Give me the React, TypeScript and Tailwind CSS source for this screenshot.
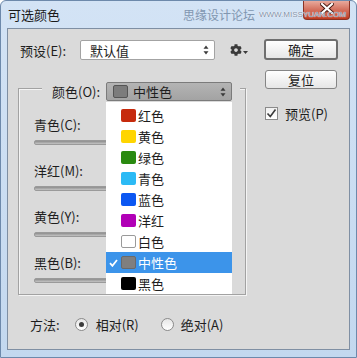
import { FaCog } from "react-icons/fa";

const items = [
	{ name: "红色", color: "bg-[#c62a0c]" },
	{ name: "黄色", color: "bg-[#ffd500]" },
	{ name: "绿色", color: "bg-[#2a8a10]" },
	{ name: "青色", color: "bg-[#2bbaf5]" },
	{ name: "蓝色", color: "bg-[#0b57f2]" },
	{ name: "洋红", color: "bg-[#b100b6]" },
	{ name: "白色", color: "bg-white border border-[#9a9a9a]" },
	{ name: "中性色", color: "bg-[#7f7f7f] border border-[#6a6a6a]", active: true },
	{ name: "黑色", color: "bg-black" },
];

const sliders = ["青色(C):", "洋红(M):", "黄色(Y):", "黑色(B):"];

function UpDown() {
	return (
		<svg width="6" height="10" viewBox="0 0 6 10" className="shrink-0">
			<path d="M3 0.5 L5.5 3.8 L0.5 3.8 Z" fill="#3a3a3a" />
			<path d="M3 9.5 L5.5 6.2 L0.5 6.2 Z" fill="#3a3a3a" />
		</svg>
	);
}

function Radio({ checked }: { checked?: boolean }) {
	return (
		<span className="w-[13px] h-[13px] rounded-full border border-[#8a8a8a] bg-gradient-to-b from-[#e6e6e6] to-white flex items-center justify-center shrink-0">
			{checked && <span className="w-[5px] h-[5px] rounded-full bg-[#3b3b3b]" />}
		</span>
	);
}

export default function App() {
	return (
		<div className="w-[357px] h-[358px] bg-gradient-to-b from-[#d3e3f5] to-[#c3d8ef] border border-[#6d89ab] rounded-t-[6px] flex flex-col px-[6px] pb-[7px] relative overflow-hidden text-[13px] text-[#1e1e1e] font-['Noto_Sans_CJK_SC',sans-serif] leading-none">
			{/* title bar */}
			<div className="h-[27px] flex items-center shrink-0">
				<span className="pl-[1px] text-[13px] text-[#1a1a1a]">可选颜色</span>
				<div className="ml-auto pr-[4px] flex items-center gap-[4px] relative z-10">
					<span className="text-[12px] text-[#8196b0]">思缘设计论坛</span>
					<span className="text-[8px] text-[#7d8ea6] font-['Liberation_Sans',sans-serif] [text-shadow:0_0_1px_#fff,0_0_1px_#fff]">WWW.MISSYUAN.COM</span>
				</div>
			</div>

			{/* close button */}
			<div className="absolute top-[-1px] right-[6px] w-[47px] h-[20px] rounded-b-[4px] border border-t-0 border-[#8a3325] bg-gradient-to-b from-[#eab0a4] via-[#d4715f] to-[#c0391f] flex items-start justify-center pt-[3px]">
				<svg width="14" height="11" viewBox="0 0 14 11">
					<path d="M2 1 L12 10 M12 1 L2 10" stroke="#4a1a12" strokeWidth="4" strokeLinecap="square" />
					<path d="M2 1 L12 10 M12 1 L2 10" stroke="#ffffff" strokeWidth="2.2" strokeLinecap="square" />
				</svg>
			</div>

			{/* content panel */}
			<div className="flex-1 bg-[#dadada] border border-[#7f8fa3] relative flex">
				<div className="w-[240px] pl-[10px] pt-[11px] flex flex-col">
					<div className="ml-[2px] h-[20px] flex items-center">
						<span className="w-[60px]">预设(E):</span>
						<div className="w-[135px] h-[20px] bg-white border border-[#a3a3a3] rounded-[2px] flex items-center pl-[9px] pr-[5px]">
							<span className="flex-1">默认值</span>
							<UpDown />
						</div>
						<div className="ml-[15px] flex items-end text-[#3a3a3a]">
							<FaCog size={12} />
							<svg width="5" height="4" viewBox="0 0 5 4" className="ml-[1px] mb-[1px]">
								<path d="M0 0 L5 0 L2.5 3 Z" fill="#3a3a3a" />
							</svg>
						</div>
					</div>

					{/* group box */}
					<div className="mt-[28px] w-[228px] border border-[#a2a2a2] shadow-[inset_1px_1px_0_#f4f4f4,1px_1px_0_#f4f4f4] flex flex-col pb-[11px]">
						<div className="-mt-[7px] ml-[23px] w-[198px] h-[19px] bg-[#dadada] flex items-center">
							<span className="w-[64px] pl-[10px]">颜色(O):</span>
							<div className="w-[126px] h-[19px] bg-gradient-to-b from-[#b4b4b4] to-[#a3a3a3] border border-[#7b7b7b] rounded-[2px] flex items-center pl-[6px] pr-[5px]">
								<span className="w-[15px] h-[13px] rounded-[2px] bg-[#7c7c7c] border border-[#555]" />
								<span className="ml-[5px] flex-1">中性色</span>
								<UpDown />
							</div>
						</div>
						<div className="pl-[15px] pt-[14px] flex flex-col gap-[16px]">
							{sliders.map((s) => (
								<div key={s} className="flex flex-col">
									<span className="h-[18px] flex items-center">{s}</span>
									<div className="mt-[7px] w-[196px] h-[5px] rounded-[2px] bg-gradient-to-b from-[#8d8d8d] to-[#c4c4c4] border border-[#9a9a9a]" />
								</div>
							))}
						</div>
					</div>

					{/* method */}
					<div className="mt-[20px] ml-[12px] h-[18px] flex items-center">
						<span>方法:</span>
						<span className="ml-[15px]"><Radio checked /></span>
						<span className="ml-[8px]">相对(R)</span>
						<span className="ml-[22px]"><Radio /></span>
						<span className="ml-[7px]">绝对(A)</span>
					</div>
				</div>

				<div className="ml-[16px] pt-[10px] flex flex-col">
					<button className="w-[74px] h-[21px] rounded-[3px] border-2 border-[#6f6f6f] bg-gradient-to-b from-white to-[#e6e6e6] flex items-center justify-center text-[13px]">
						确定
					</button>
					<button className="mt-[10px] ml-[1px] w-[72px] h-[19px] rounded-[3px] border border-[#858585] bg-gradient-to-b from-white to-[#e6e6e6] flex items-center justify-center text-[13px]">
						复位
					</button>
					<div className="mt-[18px] ml-[1px] flex items-center">
						<span className="w-[13px] h-[13px] border border-[#8a8a8a] bg-gradient-to-b from-[#f0f0f0] to-white flex items-center justify-center">
							<svg width="11" height="11" viewBox="0 0 11 11">
								<path d="M1.5 5.5 L4.3 8.5 L9.5 1.5" stroke="#3a3a3a" strokeWidth="1.6" fill="none" />
							</svg>
						</span>
						<span className="ml-[7px]">预览(P)</span>
					</div>
				</div>

				{/* open dropdown list */}
				<div className="absolute left-[98px] top-[73px] w-[126px] h-[192px] bg-white pt-[3px] flex flex-col">
					{items.map((it) => (
						<div key={it.name} className={`h-[21px] flex items-center ${it.active ? "bg-[#3c94ea] text-white" : ""}`}>
							<span className="w-[15px] flex justify-center">
								{it.active && (
									<svg width="9" height="8" viewBox="0 0 9 8">
										<path d="M1 4.2 L3.4 6.8 L8 1" stroke="#fff" strokeWidth="1.8" fill="none" />
									</svg>
								)}
							</span>
							<span className={`w-[15px] h-[13px] rounded-[2px] shrink-0 ${it.color}`} />
							<span className="ml-[2px]">{it.name}</span>
						</div>
					))}
				</div>
			</div>
		</div>
	);
}
